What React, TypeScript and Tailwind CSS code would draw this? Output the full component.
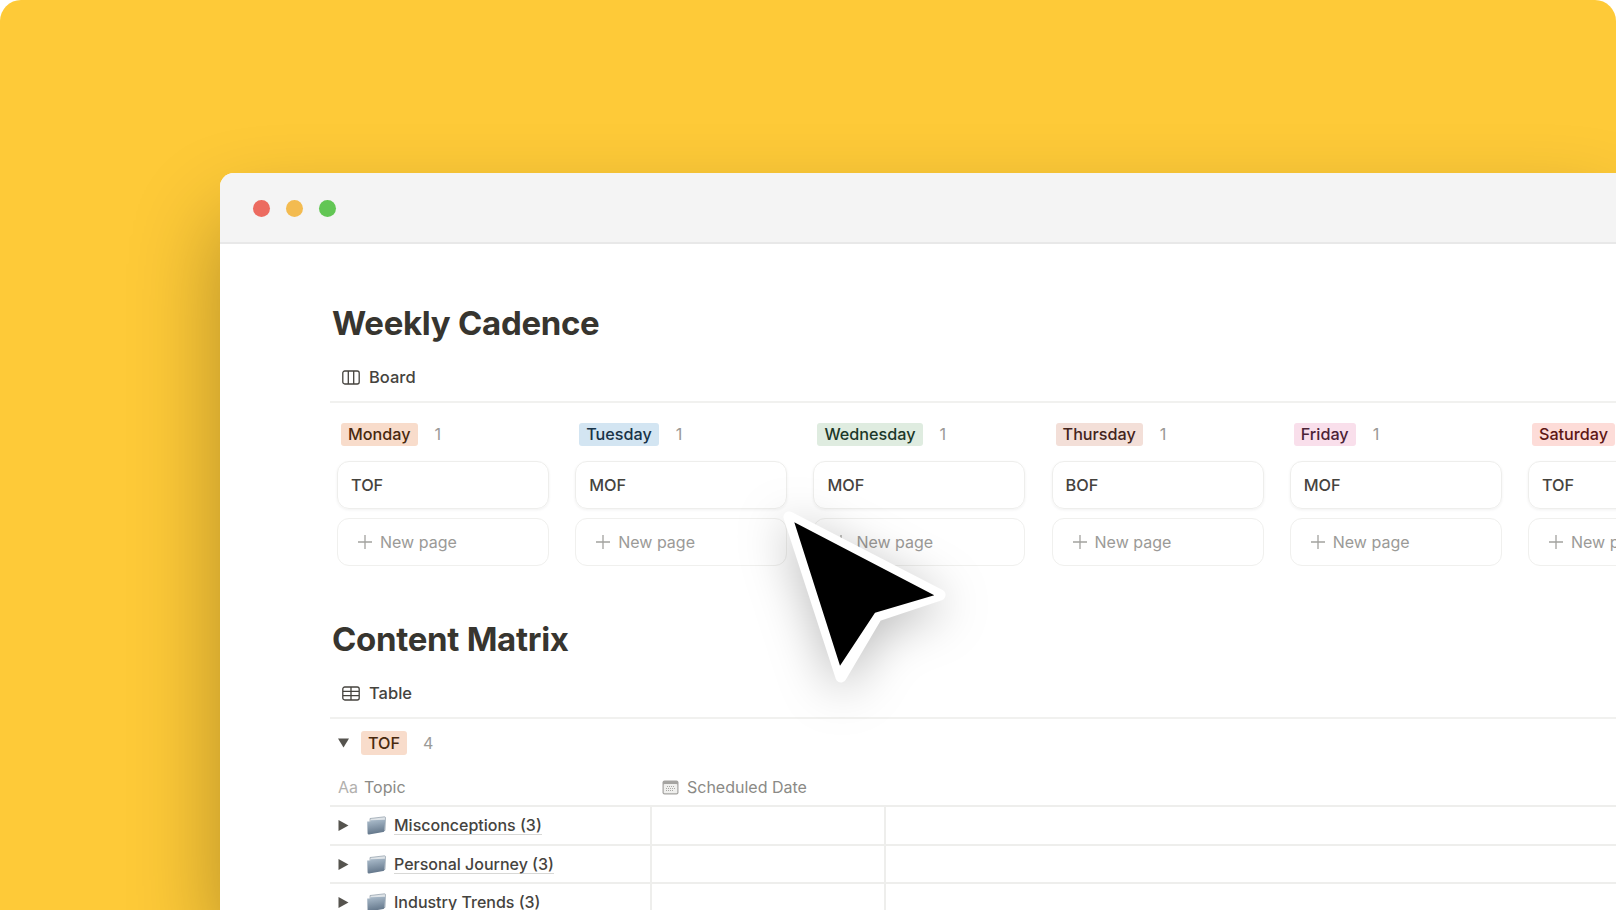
const days = [
	{ name: "Monday", tag: "bg-[#f8dccb] text-[#49290e]", card: "TOF", gap: "ml-[17px]" },
	{ name: "Tuesday", tag: "bg-[#d3e5f2] text-[#183347]", card: "MOF", gap: "ml-[17px]" },
	{ name: "Wednesday", tag: "bg-[#dfece0] text-[#1c3829]", card: "MOF", gap: "ml-[17px]" },
	{ name: "Thursday", tag: "bg-[#f3dfd8] text-[#44241c]", card: "BOF", gap: "ml-[17px]" },
	{ name: "Friday", tag: "bg-[#f9dfeb] text-[#4c2337]", card: "MOF", gap: "ml-[17px]" },
	{ name: "Saturday", tag: "bg-[#fddcd8] text-[#5d1715]", card: "TOF", gap: "ml-[17px]" },
];

const rows = ["Misconceptions (3)", "Personal Journey (3)", "Industry Trends (3)"];

const BoardIcon = () => (
	<svg width="18" height="15" viewBox="0 0 18 15" fill="none" stroke="#45433e" strokeWidth="1.3">
		<rect x="0.8" y="1" width="16.4" height="13" rx="2" />
		<path d="M6.3 1v13M11.7 1v13" />
	</svg>
);

const TableIcon = () => (
	<svg width="18" height="15" viewBox="0 0 18 15" fill="none" stroke="#45433e" strokeWidth="1.3">
		<rect x="0.8" y="1" width="16.4" height="13" rx="2" />
		<path d="M1 5.3h16M1 9.7h16M9 1v13" />
	</svg>
);

const PlusIcon = () => (
	<svg width="14" height="14" viewBox="0 0 14 14" stroke="#a3a29f" strokeWidth="1.3">
		<path d="M7 0v14M0 7h14" />
	</svg>
);

const CalendarIcon = () => (
	<svg width="17" height="15" viewBox="0 0 17 15">
		<rect x="0.5" y="0.5" width="16" height="14" rx="2" fill="#a5a4a1" />
		<rect x="1.7" y="4" width="13.6" height="9.3" rx="0.8" fill="#efefed" />
		<path d="M5 6.5h7M4 8.5h9M4 10.5h7" stroke="#a9a8a5" strokeDasharray="1 1" />
	</svg>
);

const FolderIcon = () => (
	<svg width="20" height="19" viewBox="0 0 20 19">
		<defs>
			<linearGradient id="folder-front" x1="0" y1="0" x2="0.2" y2="1">
				<stop offset="0" stopColor="#aebfce" />
				<stop offset="1" stopColor="#64778b" />
			</linearGradient>
		</defs>
		<path d="M4 2.5 18.5 0.8c.7 0 1 .4 1 1L19 14.5H4z" fill="#dfe4e8" stroke="#7f8e9c" strokeWidth="0.6" />
		<path d="M1.2 5.5h3.2l.4-1.3 13.6-.4c.6 0 .9.4.8 1L18.3 15c-.1.6-.4 1-1 1.1L3 18.4c-.8.1-1.3-.3-1.4-1z" fill="url(#folder-front)" />
	</svg>
);

const Caret = ({ open }: { open?: boolean }) => (
	<svg width="11" height="11" viewBox="0 0 11 11" fill="#55534e">
		{open ? <path d="M0 1.5h11L5.5 10.5z" /> : <path d="M.5 0 10.5 5.5.5 11z" />}
	</svg>
);

const ViewTab: React.FC<{ label: string; icon: React.ReactNode }> = ({ label, icon }) => (
	<div className="h-[41px] flex items-center pl-3 pb-[8px] border-b-2 border-[#f1f1ef] text-[16.5px] font-medium text-[#45433e]">
		{icon}
		<span className="ml-[9px]">{label}</span>
	</div>
);

const App = () => {
	return (
		<div className="relative w-[1616px] h-[910px] overflow-hidden bg-white font-['Inter',sans-serif]">
			<div className="w-full h-full bg-[#feca38] rounded-t-[21px] pl-[220px] pt-[173px] overflow-hidden">
				<div className="w-[1396px] h-[737px] bg-white rounded-tl-[14px] overflow-hidden shadow-[0_45px_90px_rgba(0,0,0,0.3)]">
					<div className="h-[71px] bg-[#f4f4f4] border-b-2 border-[#e8e8e8] flex items-center gap-[16px] pl-[33px] pt-[1px]">
						<div className="w-[17px] h-[17px] rounded-full bg-[#ec6b60]" />
						<div className="w-[17px] h-[17px] rounded-full bg-[#f3bb50]" />
						<div className="w-[17px] h-[17px] rounded-full bg-[#62c654]" />
					</div>

					<div className="pl-[110px] pt-[55px] text-[#37352f]">
						<h2 className="ml-[2px] h-[48px] leading-[48px] text-[33px] font-bold tracking-[-0.3px]">Weekly Cadence</h2>
						<div className="mt-[15px]">
							<ViewTab label="Board" icon={<BoardIcon />} />
						</div>

						<div className="flex gap-[26.2px] pl-[7px] pt-[20px]">
							{days.map((day) => (
								<div key={day.name} className="w-[212px] shrink-0">
									<div className="h-[23px] flex items-center pl-1 text-[16.2px] font-medium">
										<span className={`h-[23px] leading-[23px] px-[7px] rounded-[3px] ${day.tag}`}>{day.name}</span>
										<span className={`${day.gap} font-normal text-[#9b9a97]`}>1</span>
									</div>
									<div className="mt-[15px] h-[48px] flex items-center pl-[13px] rounded-[12px] border border-[#eeeeec] shadow-[0_1px_3px_rgba(0,0,0,0.06)] text-[16.3px] font-medium text-[#45433e]">
										{day.card}
									</div>
									<div className="mt-[9px] h-[48px] flex items-center pl-[20px] rounded-[12px] border border-[#f0f0ee] text-[16px] text-[#9b9a97]">
										<PlusIcon />
										<span className="ml-[8px] whitespace-nowrap">New page</span>
									</div>
								</div>
							))}
						</div>

						<h2 className="ml-[2px] mt-[49px] h-[48px] leading-[48px] text-[33px] font-bold tracking-[-0.3px]">Content Matrix</h2>
						<div className="mt-[15px]">
							<ViewTab label="Table" icon={<TableIcon />} />
						</div>

						<div className="h-[47px] flex items-center pl-[8px]">
							<Caret open />
							<span className="ml-[12px] h-[24px] leading-[24px] px-[7px] rounded-[3px] bg-[#f8dccb] text-[#49290e] text-[16.2px] font-medium">TOF</span>
							<span className="ml-[16px] text-[16px] text-[#9b9a97]">4</span>
						</div>

						<div className="h-[41px] flex items-center pt-[3px] border-b-2 border-[#eeeeec] text-[16px] text-[#8b8a86]">
							<div className="w-[321px] pl-[8px] flex items-center shrink-0">
								<span className="text-[#b2b1ae]">Aa</span>
								<span className="ml-[6px]">Topic</span>
							</div>
							<div className="pl-[11px] flex items-center">
								<CalendarIcon />
								<span className="ml-[8px]">Scheduled Date</span>
							</div>
						</div>

						{rows.map((row) => (
							<div key={row} className="h-[38.5px] flex border-b-2 border-[#eeeeec]">
								<div className="w-[322px] shrink-0 flex items-center pl-[8px] pt-[1px] border-r-2 border-[#eeeeec] text-[16px] font-medium text-[#45433e]">
									<Caret />
									<span className="ml-[17px]">
										<FolderIcon />
									</span>
									<span className="ml-[8px] border-b border-[#d8d8d6] leading-[18px]">{row}</span>
								</div>
								<div className="w-[234px] border-r-2 border-[#eeeeec]" />
							</div>
						))}
					</div>
				</div>
			</div>

			<svg
				className="absolute left-[770px] top-[500px] overflow-visible drop-shadow-[0_10px_24px_rgba(0,0,0,0.26)]"
				width="190"
				height="190"
				viewBox="770 500 190 190"
			>
				<path d="M789 517 940 595 877 616 841 677Z" fill="#fff" stroke="#fff" strokeWidth="11" strokeLinejoin="round" />
				<path d="M794.3 522.3 934.3 595.3 875 612.7 840 665.7Z" fill="#000" />
			</svg>
		</div>
	);
};

export default App;
